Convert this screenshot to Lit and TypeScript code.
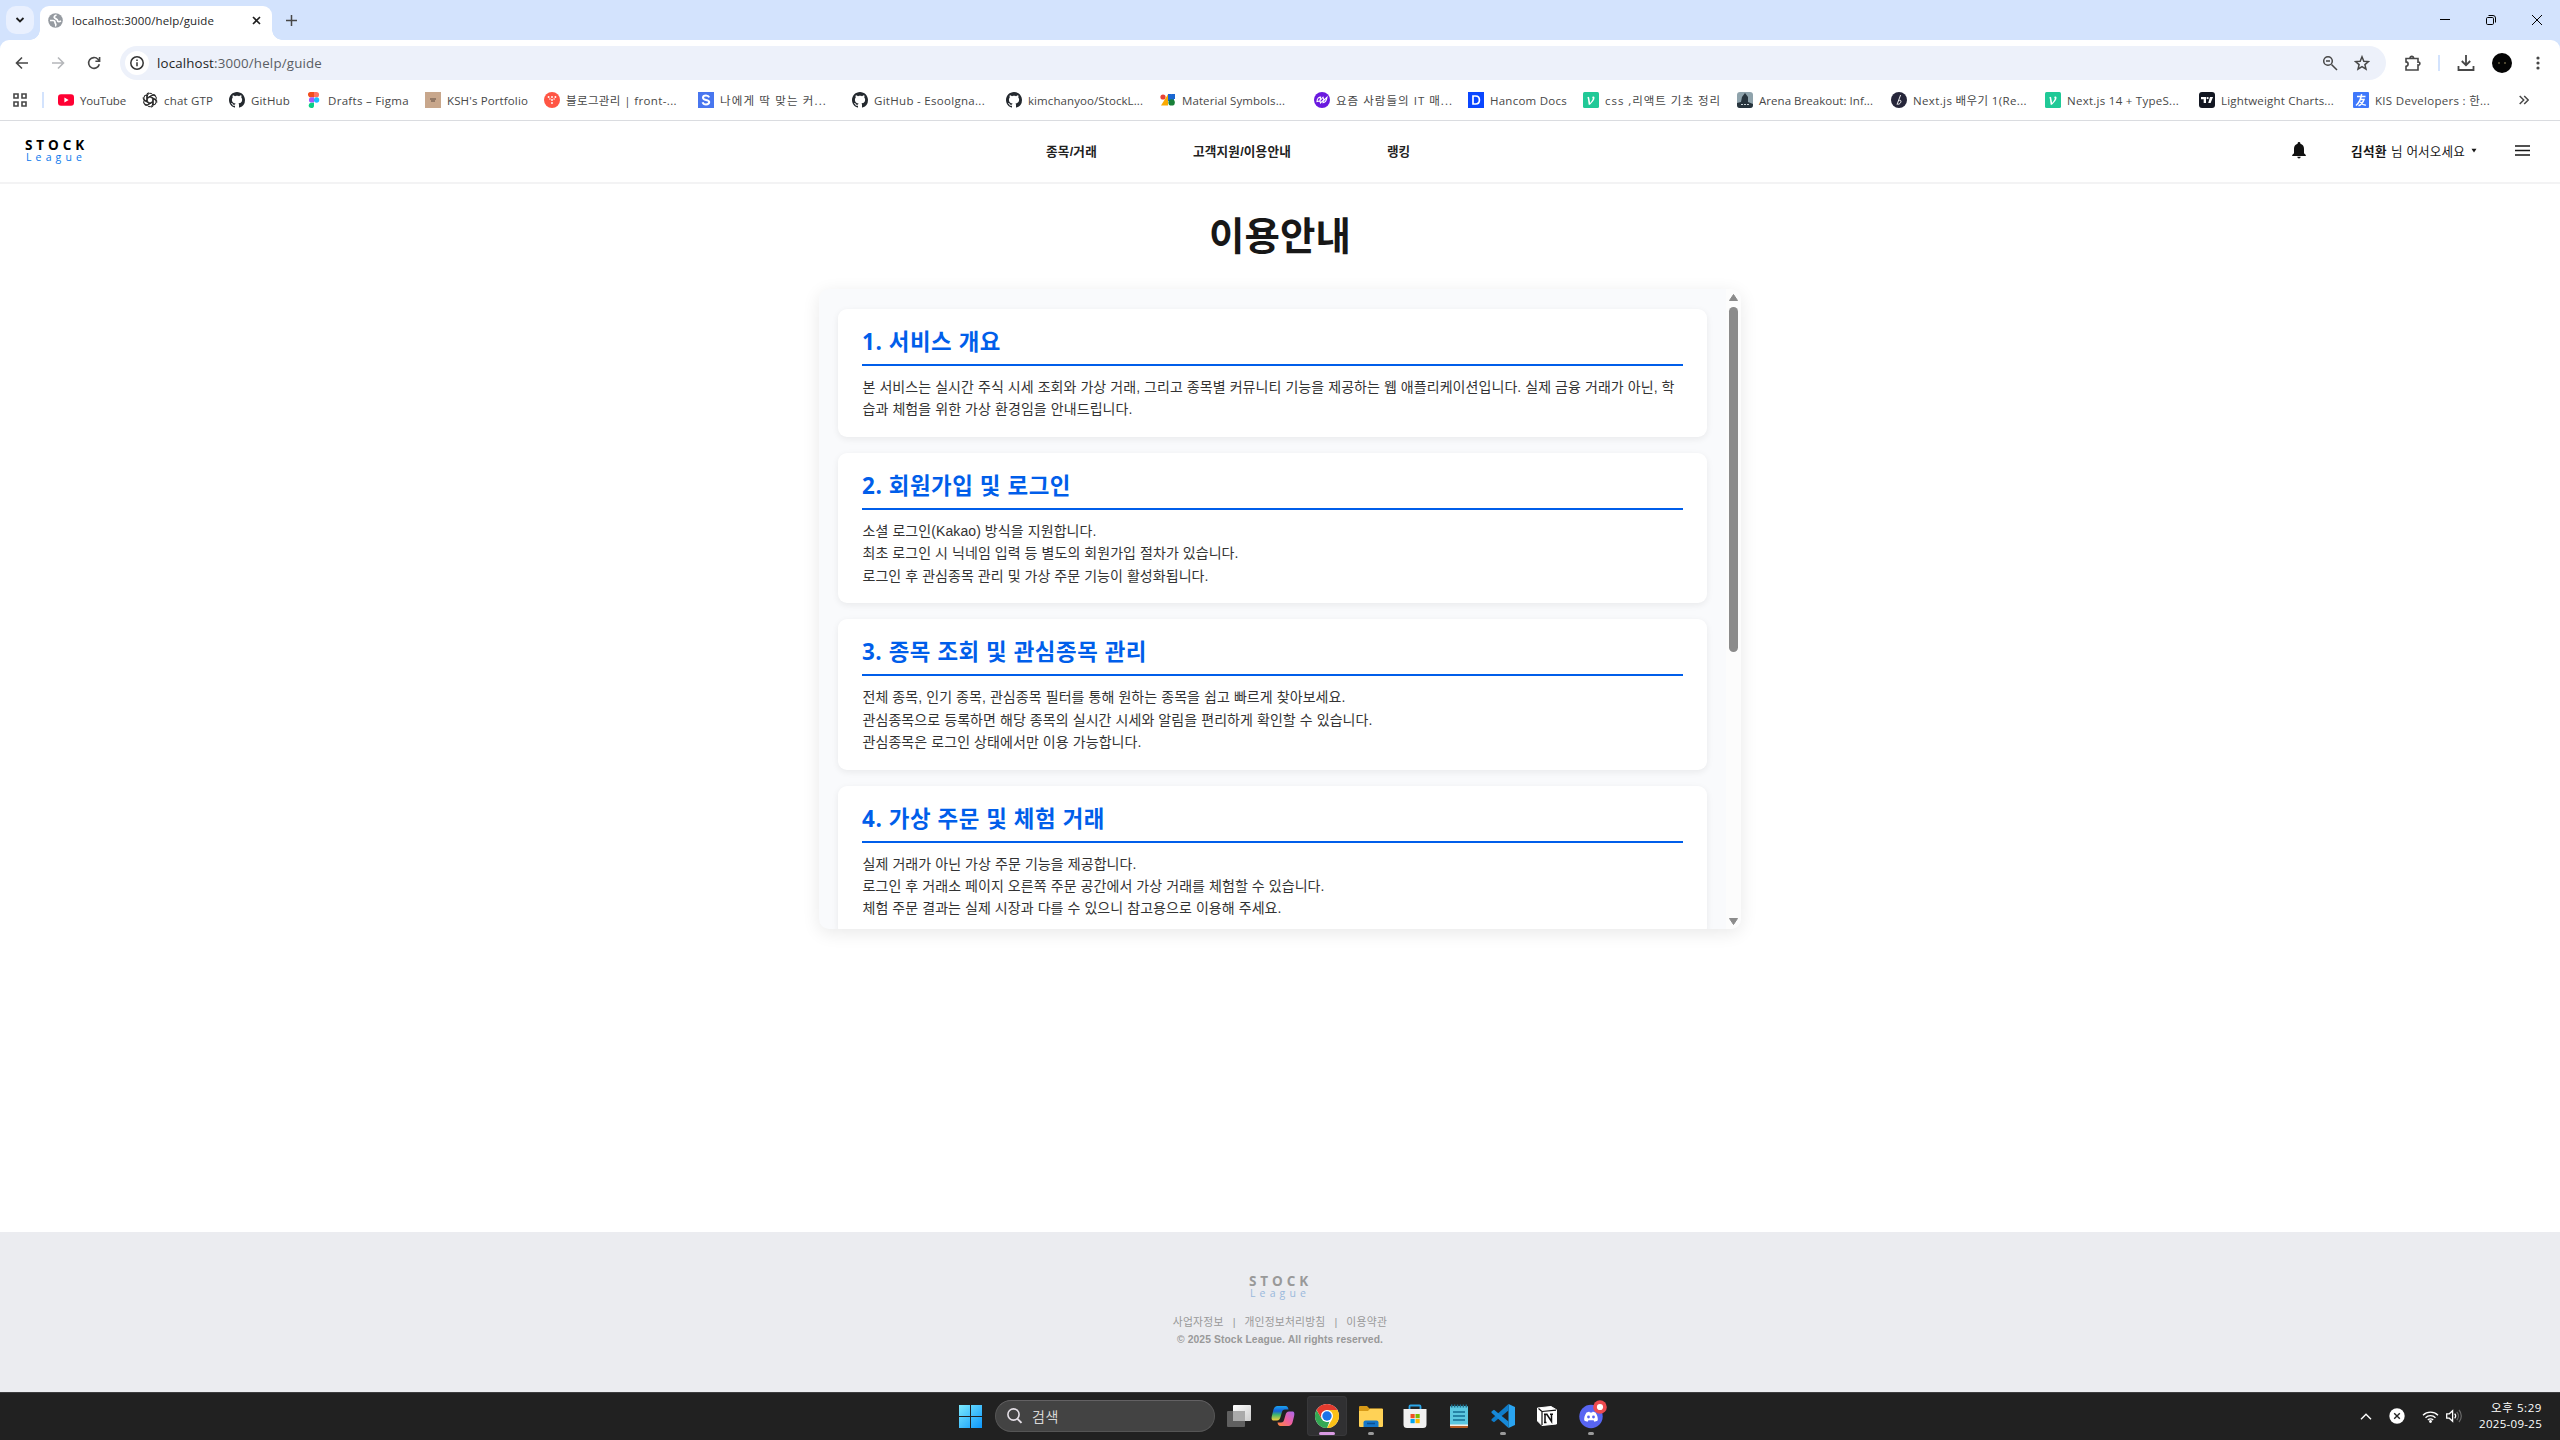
import { LitElement, html, css, svg, nothing } from "lit";
import { customElement, property } from "lit/decorators.js";

/** A single line of text that spreads its letters over a given width. */
@customElement("fit-text")
class FitText extends LitElement {
  @property() text = "";
  @property({ type: Number }) w = 0;
  static styles = css`
    :host { display: inline-block; white-space: pre; flex: none; }
  `;
  render() {
    return html`<span>${this.text}</span>`;
  }
  updated() {
    const span = this.renderRoot.querySelector("span") as HTMLElement;
    span.style.letterSpacing = "0px";
    if (!this.w) return;
    const n = [...this.text].length;
    const gap = (this.w - span.getBoundingClientRect().width) / n;
    span.style.letterSpacing = `${gap.toFixed(3)}px`;
  }
}

const fit = (text: string, w: number) => html`<fit-text .text=${text} .w=${w}></fit-text>`;

const box = (w: number, h: number, body: unknown, vb = `0 0 ${w} ${h}`) =>
  html`<svg width=${w} height=${h} viewBox=${vb} fill="none">${body}</svg>`;

/* ---------- bookmark icons, 16 x 16 ---------- */
const githubMark = svg`<path fill="#24292f" d="M8 0C3.58 0 0 3.58 0 8c0 3.54 2.29 6.53 5.47 7.59.4.07.55-.17.55-.38 0-.19-.01-.82-.01-1.49-2.01.37-2.53-.49-2.69-.94-.09-.23-.48-.94-.82-1.13-.28-.15-.68-.52-.01-.53.63-.01 1.08.58 1.23.82.72 1.21 1.87.87 2.33.66.07-.52.28-.87.51-1.07-1.78-.2-3.64-.89-3.64-3.95 0-.87.31-1.59.82-2.15-.08-.2-.36-1.02.08-2.12 0 0 .67-.21 2.2.82.64-.18 1.32-.27 2-.27s1.36.09 2 .27c1.53-1.04 2.2-.82 2.2-.82.44 1.1.16 1.92.08 2.12.51.56.82 1.27.82 2.15 0 3.07-1.87 3.75-3.65 3.95.29.25.54.73.54 1.48 0 1.07-.01 1.93-.01 2.2 0 .21.15.46.55.38A8.01 8.01 0 0 0 16 8c0-4.42-3.58-8-8-8z"/>`;
const velog = svg`<rect width="16" height="16" rx="1.5" fill="#20c997"/><path d="M4.2 5.6L6 4.7l1.2 6.2c1.6-1.7 2.7-3.4 2.5-4.6-.1-.6-.7-.6-.5-1.2.3-.8 2.1-.9 2.3.5.3 2.1-2 4.9-4.6 7.1H5.7L4.8 6.4z" fill="#fff"/>`;

const marks: Record<string, unknown> = {
  youtube: svg`<rect y="2.2" width="16" height="11.6" rx="3" fill="#ff0033"/><path d="M6.4 5.6v4.8L10.6 8z" fill="#fff"/>`,
  gpt: svg`<g stroke="#222" stroke-width="1" fill="none">${[0, 60, 120, 180, 240, 300].map(
    (a) => svg`<path transform="rotate(${a} 8 8)" d="M5.3 9.2V4a2.900 2.900 0 0 1 5.200-1.600M5.300 5.800l5-2.900a2.900 2.900 0 0 1 3.300.5"/>`
  )}</g>`,
  github: githubMark,
  figma: svg`<path d="M4 0h4v5.3H5.6A2.65 2.65 0 0 1 4 0z" fill="#f24e1e"/><path d="M8 0h2.4a2.65 2.65 0 0 1 0 5.3H8z" fill="#ff7262"/><path d="M5.6 5.3H8v5.3H5.6a2.65 2.65 0 0 1 0-5.3z" fill="#a259ff"/><circle cx="10.6" cy="8" r="2.65" fill="#1abcfe"/><path d="M5.6 10.7H8v2.6a2.65 2.65 0 1 1-2.4-2.6z" fill="#0acf83"/>`,
  ksh: svg`<rect width="16" height="16" fill="#c8a78c"/><path d="M5 7h6M6 9h4" stroke="#5c4a40" stroke-width="1"/>`,
  blog: svg`<circle cx="8" cy="8" r="8" fill="#ff5544"/><g fill="#fff"><circle cx="4.6" cy="5" r=".95"/><circle cx="8" cy="5" r=".95"/><circle cx="11.4" cy="5" r=".95"/><circle cx="8" cy="8" r=".95"/><circle cx="5.9" cy="7" r=".7"/><circle cx="10.1" cy="7" r=".7"/><circle cx="8" cy="11" r=".95"/></g>`,
  s: svg`<rect width="16" height="16" fill="#4876ef"/><path d="M11.2 5.4C10.6 3.9 9.4 3.5 8 3.5c-1.700 0-3 .8-3 2.200 0 3 6.200 1.400 6.200 4.400 0 1.600-1.400 2.400-3.200 2.400-1.700 0-2.900-.7-3.400-2.200" stroke="#fff" stroke-width="2"/>`,
  material: svg`<circle cx="3" cy="5" r="2.6" fill="#ea4335"/><path d="M8 2.200v11.200H1z" fill="#fbaa00"/><path d="M8 2h3a3 3 0 0 1 3 3v4H8z" fill="#1a67d2"/><circle cx="11.600" cy="10.400" r="3.200" fill="#188038"/><path d="M12 2h3v5h-3z" fill="#1967d2"/>`,
  yozm: svg`<circle cx="8" cy="8" r="8" fill="#6a19df"/><path d="M3 9.600c0-3 2-4.500 3.600-4.500L6 8.500l3-3.300 1 3 3-3c-.6 4-2.600 5.500-4 5.500l.4-2.500L6.500 11 6 9z" stroke="#fff" stroke-width="1.100"/>`,
  hancom: svg`<rect width="16" height="16" fill="#0a46ff"/><path d="M5 4h2.700C10.200 4 11.400 5.700 11.400 8s-1.200 4-3.700 4H5z" stroke="#fff" stroke-width="1.700"/>`,
  velog,
  arena: svg`<rect width="16" height="16" rx="3" fill="#8fa3ac"/><path d="M0 11l4-1 1-5 3-4 3 4v5l5 2v1a3 3 0 0 1-3 3H3a3 3 0 0 1-3-3z" fill="#27343d"/><path d="M4 12.500h8" stroke="#c7d2d6" stroke-dasharray="2 1"/>`,
  next: svg`<circle cx="8" cy="8" r="8" fill="#26263a"/><path d="M9.600 3L6 12.500M7.300 9c2-1.500 3.200-.5 2.500 1.200-.6 1.600-2.400 2.500-3.600 1.800" stroke="#fff" stroke-width=".9"/>`,
  tv: svg`<rect width="16" height="16" rx="3" fill="#131722"/><path d="M2 5h5v6H4.700V7.300H2z" fill="#fff"/><circle cx="8.600" cy="6.100" r="1.150" fill="#fff"/><path d="M11 5h3l-2.400 6H9.200z" fill="#fff"/>`,
  kis: svg`<rect width="16" height="16" rx="1" fill="#3f78fb"/><path d="M4 4.600h8.500M8.600 2.200C8 7 6.600 10.500 3 13.500M6.800 7.500h4.200C10 10.500 7.500 13 5.500 13.800M7.300 9.800c1.300 2 3 3 5.500 3.400" stroke="#fff" stroke-width="1.500"/>`,
};

interface Bookmark { icon: string; label: string; cell: number; text: number; }
const b = (icon: string, label: string, cell: number, text: number): Bookmark => ({ icon, label, cell, text });
const bookmarks: Bookmark[] = [
  b("youtube", "YouTube", 84, 46), b("gpt", "chat GTP", 87, 49), b("github", "GitHub", 77, 39),
  b("figma", "Drafts – Figma", 119, 81), b("ksh", "KSH's Portfolio", 119, 81), b("blog", "블로그관리 | front-...", 154, 111),
  b("s", "나에게 딱 맞는 커...", 154, 107), b("github", "GitHub - Esoolgna...", 154, 111), b("github", "kimchanyoo/StockL...", 154, 115),
  b("material", "Material Symbols...", 154, 103), b("yozm", "요즘 사람들의 IT 매...", 154, 117), b("hancom", "Hancom Docs", 115, 77),
  b("velog", "css ,리액트 기초 정리", 154, 116), b("arena", "Arena Breakout: Inf...", 154, 114), b("next", "Next.js 배우기 1(Re...", 154, 114),
  b("velog", "Next.js 14 + TypeS...", 154, 112), b("tv", "Lightweight Charts...", 154, 113), b("kis", "KIS Developers : 한...", 154, 115),
];

/* ---------- guide content ---------- */
interface Section { title: string; tw: number; lines: [string, number][]; }
const sections: Section[] = [
  { title: "1. 서비스 개요", tw: 139, lines: [
    ["본 서비스는 실시간 주식 시세 조회와 가상 거래, 그리고 종목별 커뮤니티 기능을 제공하는 웹 애플리케이션입니다. 실제 금융 거래가 아닌, 학", 812],
    ["습과 체험을 위한 가상 환경임을 안내드립니다.", 270] ] },
  { title: "2. 회원가입 및 로그인", tw: 209, lines: [
    ["소셜 로그인(Kakao) 방식을 지원합니다.", 234],
    ["최초 로그인 시 닉네임 입력 등 별도의 회원가입 절차가 있습니다.", 376],
    ["로그인 후 관심종목 관리 및 가상 주문 기능이 활성화됩니다.", 346] ] },
  { title: "3. 종목 조회 및 관심종목 관리", tw: 285, lines: [
    ["전체 종목, 인기 종목, 관심종목 필터를 통해 원하는 종목을 쉽고 빠르게 찾아보세요.", 483],
    ["관심종목으로 등록하면 해당 종목의 실시간 시세와 알림을 편리하게 확인할 수 있습니다.", 510],
    ["관심종목은 로그인 상태에서만 이용 가능합니다.", 279] ] },
  { title: "4. 가상 주문 및 체험 거래", tw: 243, lines: [
    ["실제 거래가 아닌 가상 주문 기능을 제공합니다.", 274],
    ["로그인 후 거래소 페이지 오른쪽 주문 공간에서 가상 거래를 체험할 수 있습니다.", 462],
    ["체험 주문 결과는 실제 시장과 다를 수 있으니 참고용으로 이용해 주세요.", 419] ] },
];

/* ---------- browser chrome ---------- */
@customElement("browser-chrome")
class BrowserChrome extends LitElement {
  static styles = css`
    :host { display: block; font-family: "Open Sans", "Noto Sans CJK KR", sans-serif; background: #d3e3fd; }
    svg { display: block; flex: none; }
    .strip { display: flex; height: 40px; align-items: center; }
    .search { width: 28px; height: 28px; border-radius: 10px; background: #e9f0fe; margin-left: 6px; display: grid; place-items: center; }
    .tab { position: relative; box-sizing: border-box; align-self: flex-end; margin-left: 6px; width: 232px; height: 34px; border-radius: 9px 9px 0 0; background: #fff; display: flex; align-items: center; padding: 0 11px 5px 8px; font-size: 11.500px; color: #1f1f1f; }
    .tab::before, .tab::after { content: ""; position: absolute; bottom: 0; width: 10px; height: 10px; }
    .tab::before { left: -10px; background: radial-gradient(circle at 0 0, transparent 9.500px, #fff 10px); }
    .tab::after { right: -10px; background: radial-gradient(circle at 100% 0, transparent 9.500px, #fff 10px); }
    .tab fit-text { margin-left: 9px; flex: 1; }
    .plus { margin-left: 14px; }
    .win { margin-left: auto; display: flex; align-items: center; gap: 36px; margin-right: 18px; }
    .bar { display: flex; align-items: center; height: 46px; background: #fff; border-radius: 9px 9px 0 0; }
    .nav { display: flex; gap: 20px; padding-left: 14px; }
    .omni { margin-left: 18px; width: 2266px; height: 34px; border-radius: 17px; background: #edf1fa; display: flex; align-items: center; box-sizing: border-box; padding: 0 16px 0 5px; font-size: 13.300px; color: #1f1f1f; }
    .info { width: 24px; height: 24px; border-radius: 12px; background: #fff; display: grid; place-items: center; margin-right: 8px; }
    .omni .path { color: #5a5e64; }
    .omni .tools { margin-left: auto; display: flex; gap: 16px; }
    .ext { display: flex; align-items: center; margin-left: 18px; }
    .sep { width: 2px; height: 16px; background: #d3e3fd; flex: none; }
    .ext .sep { margin: 0 17px; }
    .avatar { margin: 0 24px 0 17px; }
    .marks { display: flex; align-items: center; height: 28px; padding-bottom: 6px; background: #fff; border-bottom: 1px solid #dadce0; font-size: 11.500px; color: #474747; }
    .marks .apps { margin-left: 13px; margin-right: 15px; }
    .marks .sep { margin-right: 14px; }
    .mark { display: flex; align-items: center; gap: 6px; flex: none; }
    .more { margin-left: 12px; }
  `;
  render() {
    const s = "#474747";
    return html`
      <div class="strip">
        <div class="search">${box(10, 10, svg`<path d="M1.500 3l3.500 3.500L8.500 3" stroke="#1f1f1f" stroke-width="1.800"/>`)}</div>
        <div class="tab">
          ${box(15, 15, svg`<circle cx="7.500" cy="7.500" r="7.300" fill="#969ba1"/><path d="M8.500 2C6.500 2.500 5.500 4 6.800 5.200S9.500 6 9.500 7.500s2 1.200 3.500.5M2 7.500h3c1.500 0 2 1 2 2s.8 1 .8 2-.3 1.500-.8 1.500" stroke="#fff" stroke-width="1.700"/>`)}
          ${fit("localhost:3000/help/guide", 142)}
          ${box(9, 9, svg`<path d="M1 1l7 7M8 1L1 8" stroke="#1f1f1f" stroke-width="1.600"/>`)}
        </div>
        <div class="plus">${box(11, 11, svg`<path d="M5.500 0v11M0 5.500h11" stroke="#474747" stroke-width="1.500"/>`)}</div>
        <div class="win">
          ${box(10, 10, svg`<path d="M0 4.500h10" stroke="#000"/>`)}
          ${box(10, 10, svg`<rect x=".5" y="2.500" width="7" height="7" rx="1.200" stroke="#000"/><path d="M2.500.5H7A2.500 2.500 0 0 1 9.500 3v4.500" stroke="#000"/>`)}
          ${box(10, 10, svg`<path d="M0 0l10 10M10 0L0 10" stroke="#000"/>`)}
        </div>
      </div>
      <div class="bar">
        <div class="nav">
          ${box(16, 16, svg`<path d="M14 8H3M8 2.500L2.500 8 8 13.500" stroke="#474747" stroke-width="1.600"/>`)}
          ${box(16, 16, svg`<path d="M2 8h11M8 2.500L13.500 8 8 13.500" stroke="#b5b7ba" stroke-width="1.600"/>`)}
          ${box(16, 16, svg`<path d="M13.300 9.200A5.400 5.400 0 1 1 12 4.300l1.300 1.500M13.600 2v4.200H9.400" stroke="#474747" stroke-width="1.600"/>`)}
        </div>
        <div class="omni">
          <div class="info">${box(14, 14, svg`<circle cx="7" cy="7" r="6.200" stroke="#333" stroke-width="1.500"/><path d="M7 6.200v4M7 3.500v1.500" stroke="#333" stroke-width="1.500"/>`)}</div>
          ${fit("localhost", 57)}<span class="path">${fit(":3000/help/guide", 108)}</span>
          <div class="tools">
            ${box(16, 16, svg`<circle cx="6" cy="6" r="4.300" stroke=${s} stroke-width="1.500"/><path d="M9.500 9.500L15 15M4 6h4" stroke=${s} stroke-width="1.500"/>`)}
            ${box(16, 16, svg`<path d="M8 1.800l1.800 4.400 4.700.4-3.600 3 1.100 4.600L8 11.700l-4 2.500 1.100-4.600-3.600-3 4.700-.4z" stroke=${s} stroke-width="1.500"/>`)}
          </div>
        </div>
        <div class="ext">
          ${box(17, 17, svg`<path d="M2 3.500h12v3.600c2.500-.5 2.500 3.500 0 3V15H2v-3.600c2.800-.2 2.800-4.400 0-4.500zM6 3.500C5.700.7 9.900.7 9.600 3.500z" stroke=${s} stroke-width="1.600"/>`)}
          <div class="sep"></div>
          ${box(18, 18, svg`<path d="M9 1v10M4.800 7L9 11.200 13.200 7M1.500 12v4h15v-4" stroke=${s} stroke-width="1.800"/>`)}
          <div class="avatar">${box(20, 20, svg`<circle cx="10" cy="10" r="10" fill="#050505"/><path d="M6 10h2M12 10h2" stroke="#93875c" stroke-width="1.200"/>`)}</div>
          ${box(4, 14, svg`<g fill=${s}><circle cx="2" cy="2" r="1.600"/><circle cx="2" cy="7" r="1.600"/><circle cx="2" cy="12" r="1.600"/></g>`)}
        </div>
      </div>
      <div class="marks">
        <div class="apps">${box(14, 14, svg`<path d="M1 1h4v4H1zM9 1h4v4H9zM1 9h4v4H1zM9 9h4v4H9z" stroke=${s} stroke-width="1.600"/>`)}</div>
        <div class="sep"></div>
        ${bookmarks.map((m) => html`<div class="mark" style="width:${m.cell}px">${box(16, 16, marks[m.icon])}${fit(m.label, m.text)}</div>`)}
        <div class="more">${box(10, 10, svg`<path d="M.7 1l4 4-4 4M5.200 1l4 4-4 4" stroke=${s} stroke-width="1.500"/>`)}</div>
      </div>
    `;
  }
}

/* ---------- site logo ---------- */
@customElement("stock-logo")
class StockLogo extends LitElement {
  @property({ type: Boolean, reflect: true }) muted = false;
  static styles = css`
    :host { display: block; width: 62px; color: #000; }
    .a { font: 700 13.500px/14px "Open Sans", sans-serif; }
    .b { font: 400 10.500px/11px "Open Sans", sans-serif; color: #0a78ec; padding-left: 1px; }
    :host([muted]) .a { color: #999; }
    :host([muted]) .b { color: #9ab9dc; }
  `;
  render() {
    return html`<div class="a">${fit("STOCK", 63)}</div><div class="b">${fit("League", 60)}</div>`;
  }
}

/* ---------- the guide page ---------- */
@customElement("guide-page")
class GuidePage extends LitElement {
  static styles = css`
    :host { display: flex; flex-direction: column; height: 1271px; background: #fff; font-family: "Liberation Sans", "Noto Sans CJK KR", sans-serif; color: #171717; }
    svg { display: block; flex: none; }
    header { display: flex; align-items: center; height: 59px; border-bottom: 2px solid #f3f3f4; padding: 0 30px 2px 25px; flex: none; }
    nav { display: flex; gap: 96px; font-weight: 700; font-size: 12.600px; color: #222; margin-left: 959px; }
    .user { margin-left: auto; display: flex; align-items: center; font-size: 12.600px; }
    .user .bell { margin-right: 45px; }
    .user .name { font-weight: 700; margin-right: 4px; }
    .user .caret { margin: 0 38px 0 6px; }
    h1 { margin: 27px 0 0; height: 52px; line-height: 52px; font-size: 38.500px; text-align: center; font-weight: 700; }
    .panel { align-self: center; margin-top: 26px; width: 922px; height: 640px; display: flex; background: #f9fafc; border-radius: 10px; box-shadow: 0 4px 18px rgba(0,0,0,.09); overflow: hidden; flex: none; }
    .list { flex: 1; display: flex; flex-direction: column; gap: 16px; padding: 20px 19px 0; }
    .card { background: #fff; border-radius: 9px; padding: 16px 24px 16px; box-shadow: 0 2px 7px rgba(0,0,0,.07); flex: none; }
    h2 { margin: 0 0 10px; height: 39px; line-height: 34px; font-size: 22.400px; color: #005eea; border-bottom: 2px solid #005eea; font-family: "Open Sans", "Noto Sans CJK KR", sans-serif; font-weight: 700; }
    .line { height: 22.450px; line-height: 22.400px; font-size: 14px; color: #333; padding-left: .5px; }
    .scroll { width: 15px; background: #fcfcfc; display: flex; flex-direction: column; align-items: center; padding: 5px 0 4px; box-sizing: border-box; }
    .thumb { width: 9px; height: 345px; border-radius: 5px; background: #8b8b8b; margin: 6px 0 auto; }
    footer { margin-top: auto; height: 160px; background: #ebecf0; display: flex; flex-direction: column; align-items: center; box-sizing: border-box; padding-top: 42px; color: #999; font-size: 10.800px; flex: none; }
    .links { display: flex; gap: 9px; margin-top: 14px; height: 18px; line-height: 18px; }
    .copy { height: 16px; line-height: 18px; font-weight: 700; font-size: 10.300px; }
  `;
  render() {
    return html`
      <header>
        <stock-logo></stock-logo>
        <nav>${fit("종목/거래", 51)}${fit("고객지원/이용안내", 98)}${fit("랭킹", 23)}</nav>
        <div class="user">
          <div class="bell">${box(14, 17, svg`<path d="M7 0c.8 0 1.400.6 1.400 1.400v.4C10.700 2.400 12 4.300 12 6.800v4.500l1.800 1.700v1H.2v-1L2 11.300V6.800c0-2.500 1.300-4.400 3.600-5v-.4C5.600.6 6.200 0 7 0zM5.300 14.700h3.400a1.700 1.700 0 0 1-3.400 0z" fill="#111"/>`)}</div>
          <span class="name">${fit("김석환", 36)}</span>${fit("님 어서오세요", 74)}
          <div class="caret">${box(6, 5, svg`<path d="M.5.800h5L3 4.500z" fill="#171717"/>`)}</div>
          ${box(15, 11, svg`<path d="M0 1h15M0 5.500h15M0 10h15" stroke="#171717" stroke-width="1.600"/>`)}
        </div>
      </header>
      <h1>${fit("이용안내", 142)}</h1>
      <div class="panel">
        <div class="list">
          ${sections.map((s) => html`<section class="card"><h2>${fit(s.title, s.tw)}</h2>${s.lines.map(([t, w]) => html`<div class="line">${fit(t, w)}</div>`)}</section>`)}
        </div>
        <div class="scroll">
          ${box(9, 7, svg`<path d="M4.500.5L8.500 6.500h-8z" fill="#8b8b8b" stroke="#8b8b8b" stroke-linejoin="round"/>`)}
          <div class="thumb"></div>
          ${box(9, 7, svg`<path d="M4.500 6.500L8.500.5h-8z" fill="#8b8b8b" stroke="#8b8b8b" stroke-linejoin="round"/>`)}
        </div>
      </div>
      <footer>
        <stock-logo muted></stock-logo>
        <div class="links">${fit("사업자정보", 51)}<span>|</span>${fit("개인정보처리방침", 81)}<span>|</span>${fit("이용약관", 41)}</div>
        <div class="copy">${fit("© 2025 Stock League. All rights reserved.", 206)}</div>
      </footer>
    `;
  }
}

/* ---------- taskbar ---------- */
const apps: { icon: unknown; state?: "active" | "open" }[] = [
  { icon: svg`<defs><linearGradient id="tw" x1="0" y1="0" x2="1" y2="1"><stop stop-color="#fff"/><stop offset="1" stop-color="#ccc"/></linearGradient></defs><rect x="6" y="1" width="18" height="16" rx="1" fill="url(#tw)"/><rect x="0" y="7" width="18" height="16" rx="1" fill="#6b6b6b" opacity=".85"/><path d="M6 7h12v10H6z" fill="#aaa"/>` },
  { icon: svg`<defs><linearGradient id="c1" x1="0" y1="0" x2="0" y2="1"><stop stop-color="#1aa3ee"/><stop offset=".35" stop-color="#1660d8"/><stop offset=".6" stop-color="#3fb56c"/><stop offset="1" stop-color="#f6cf3a"/></linearGradient><linearGradient id="c2" x1="1" y1="0" x2="0" y2="1"><stop stop-color="#a968f0"/><stop offset=".5" stop-color="#ee5f9e"/><stop offset="1" stop-color="#ff8a3a"/></linearGradient></defs><path d="M6.500 2h8c2 0 2.500 1.500 3 3.500h-3.500c-2 0-2.700 1.200-3.200 3L9.500 13c-.6 2.200-1.500 3.500-3.500 3.500H3c-2.500 0-2.800-2-2-5l1.500-6C3.200 3.200 4.500 2 6.500 2z" fill="url(#c1)"/><path d="M17.500 22h-8c-2 0-2.500-1.500-3-3.500H10c2 0 2.700-1.200 3.200-3l1.300-4.500c.6-2.200 1.500-3.500 3.500-3.500h3c2.500 0 2.800 2 2 5l-1.500 6c-.7 2.300-2 3.500-4 3.500z" fill="url(#c2)"/>` },
  { state: "active", icon: svg`<circle cx="12" cy="12" r="12" fill="#fff"/><path d="M12 6h10.400A12 12 0 0 1 12 24l5.200-9z" fill="#fbc116"/><path d="M1.600 6l5.200 9L12 18l2.500-.5L12 24A12 12 0 0 1 1.600 6z" fill="#34a853"/><path d="M1.600 6A12 12 0 0 1 22.400 6H12L6.800 9v6z" fill="#e33b2e"/><circle cx="12" cy="12" r="6" fill="#fff"/><circle cx="12" cy="12" r="4.700" fill="#1a73e8"/>` },
  { state: "open", icon: svg`<path d="M0 3a1 1 0 0 1 1-1h7l2.500 2.500H23a1 1 0 0 1 1 1V9H0z" fill="#d79a17"/><path d="M0 7h9l2-2.300h12a1 1 0 0 1 1 1V22a1 1 0 0 1-1 1H1a1 1 0 0 1-1-1z" fill="#ffd256"/><path d="M4.500 23v-4.500a2 2 0 0 1 2-2h11a2 2 0 0 1 2 2V23z" fill="#1577c9"/><path d="M8 19.500h8" stroke="#0b4f93" stroke-width="1.500"/>` },
  { icon: svg`<path d="M6.500 6V2.500a1 1 0 0 1 1-1h9a1 1 0 0 1 1 1V6" stroke="#2ba5e8" stroke-width="1.800"/><path d="M.5 5h23v15.500a3.500 3.500 0 0 1-3.500 3.500H4a3.500 3.500 0 0 1-3.500-3.500z" fill="#f1f1f1"/><path d="M7.500 10h4.200v4.200H7.500z" fill="#f25022"/><path d="M12.500 10h4.200v4.200h-4.200z" fill="#7fba00"/><path d="M7.500 15h4.200v4.200H7.500z" fill="#00a4ef"/><path d="M12.500 15h4.200v4.200h-4.200z" fill="#ffb900"/>` },
  { icon: svg`<rect x="3" y="2" width="18" height="21" rx="1" fill="#5cc7e0"/><path d="M3 21h18v2a1 1 0 0 1-1 1H4a1 1 0 0 1-1-1z" fill="#b65c24"/><path d="M3 20.500h18v1.500H3z" fill="#f3efe9"/><path d="M4 2h16" stroke="#1d6e8c" stroke-width="3" stroke-dasharray="1.500 1.400"/><path d="M6 8h12M6 12h12M6 16h12" stroke="#146d92" stroke-width="1.600"/>` },
  { state: "open", icon: svg`<path d="M17.500 0L24 3v18l-6.500 3z" fill="#2aa4f0"/><path d="M17.500 0v6.500L3 18.200.5 16.500v-1.200z" fill="#0f7cc9"/><path d="M17.500 24v-6.500L3 5.800.5 7.500v1.200z" fill="#1789d8"/>` },
  { icon: svg`<path d="M2.500 4l13.500-1.500 5.500 3.300V20L7 21.500 2.500 17z" fill="#fff" stroke="#fff" stroke-linejoin="round"/><path d="M3.500 4.500l3.500 3V21M7 7.500l14-1.300" stroke="#111" stroke-width="1.200"/><path d="M10 18.500v-8h2l4.500 7v-7M9 10.300h3.500M9 18.500h2.500M15 10.300h3" stroke="#111" stroke-width="1.500"/>` },
  { state: "open", icon: svg`<circle cx="12" cy="12.500" r="11.700" fill="#5865f2"/><path d="M7.500 8.500C9 7.800 10 7.600 10.400 7.700l.5.900h2.200l.5-.9c.4-.1 1.400.1 2.900.8 1.700 2.500 2.500 5 2.300 7.700-1.200 1-2.400 1.300-3.400 1.500l-.8-1.400h-5.200l-.8 1.400c-1-.2-2.200-.5-3.400-1.500-.2-2.700.6-5.200 2.300-7.700z" fill="#fff"/><circle cx="9.500" cy="13" r="1.400" fill="#5865f2"/><circle cx="14.500" cy="13" r="1.400" fill="#5865f2"/><circle cx="21" cy="3" r="6.800" fill="#ed4a4f"/><circle cx="21" cy="3" r="3.100" fill="#fff"/>` },
];

@customElement("task-bar")
class TaskBar extends LitElement {
  static styles = css`
    :host { display: flex; align-items: center; box-sizing: border-box; height: 48px; padding-bottom: 1px; background: #212121; border-top: 1px solid #3c3c3e; color: #fff; font-family: "Open Sans", "Noto Sans CJK KR", sans-serif; }
    svg { display: block; flex: none; overflow: visible; }
    .start { margin-left: 959px; }
    .find { margin-left: 13px; width: 220px; height: 32px; border-radius: 16px; box-sizing: border-box; background: #434343; border: 1px solid #555; border-top-color: #636163; display: flex; align-items: center; padding-left: 11px; font-size: 14px; color: #d6d6d6; }
    .find fit-text { margin-left: 10px; }
    .apps { display: flex; gap: 4px; margin-left: 4px; }
    .app { width: 40px; height: 40px; box-sizing: border-box; border-radius: 4px; display: flex; flex-direction: column; align-items: center; padding-top: 8px; }
    .app.active { background: #303032; box-shadow: inset 0 0 0 1px #38383a; }
    .pill { margin-top: 4px; height: 3px; width: 6px; border-radius: 2px; background: #9a9a9a; }
    .active .pill { width: 16px; background: #d99be3; }
    .tray { margin-left: auto; display: flex; align-items: center; margin-right: 18px; }
    .status { margin: 0 17px; }
    .sound { margin-left: 7px; }
    .clock { display: flex; flex-direction: column; align-items: flex-end; font-size: 11.500px; line-height: 16px; margin-left: 16px; }
  `;
  render() {
    return html`
      <div class="start">${box(23, 23, svg`<defs><linearGradient id="st" gradientUnits="userSpaceOnUse" x1="0" y1="0" x2="23" y2="23"><stop stop-color="#7ceafd"/><stop offset="1" stop-color="#0c96fb"/></linearGradient></defs><path d="M0 0h11v11H0zM12 0h11v11H12zM0 12h11v11H0zM12 12h11v11H12z" fill="url(#st)"/>`)}</div>
      <div class="find">${box(15, 16, svg`<circle cx="6.500" cy="6.500" r="5.600" stroke="#e4dfe6" stroke-width="1.600"/><path d="M10.500 10.800l4 4" stroke="#e4dfe6" stroke-width="1.900"/>`)}${fit("검색", 27)}</div>
      <div class="apps">
        ${apps.map((a) => html`<div class="app ${a.state ?? ""}">${box(24, 24, a.icon)}${a.state ? html`<div class="pill"></div>` : nothing}</div>`)}
      </div>
      <div class="tray">
        ${box(12, 7, svg`<path d="M1 6.200l5-5 5 5" stroke="#fff" stroke-width="1.400"/>`)}
        <div class="status">${box(16, 16, svg`<circle cx="8" cy="8" r="7.700" fill="#fff"/><path d="M5.200 5.200l5.600 5.600M10.800 5.200l-5.600 5.600" stroke="#222" stroke-width="1.400"/>`)}</div>
        ${box(17, 13, svg`<path d="M1 5.200a10.600 10.600 0 0 1 15 0M3.500 7.700a7 7 0 0 1 10 0M5.800 10a3.800 3.800 0 0 1 5.400 0" stroke="#fff" stroke-width="1.300"/><circle cx="8.500" cy="11.500" r="1.400" fill="#fff"/>`)}
        <div class="sound">${box(17, 14, svg`<path d="M.7 4.800h2.600L6.600 1.700v10.600L3.300 9.200H.7z" stroke="#fff" stroke-width="1.300"/><path d="M8.700 4.700a3.500 3.500 0 0 1 0 4.600" stroke="#fff" stroke-width="1.200"/><path d="M10.800 2.800a6.500 6.500 0 0 1 0 8.400M13 1a9 9 0 0 1 0 12" stroke="#6b6b6b" stroke-width="1.200"/>`)}</div>
        <div class="clock">${fit("오후 5:29", 51)}${fit("2025-09-25", 63)}</div>
      </div>
    `;
  }
}

@customElement("app-root")
class AppRoot extends LitElement {
  static styles = css`
    :host { display: flex; flex-direction: column; width: 2560px; height: 1440px; overflow: hidden; background: #fff; }
    browser-chrome { height: 121px; flex: none; overflow: hidden; }
    guide-page { flex: none; }
    task-bar { flex: none; }
  `;
  render() {
    return html`<browser-chrome></browser-chrome><guide-page></guide-page><task-bar></task-bar>`;
  }
}
